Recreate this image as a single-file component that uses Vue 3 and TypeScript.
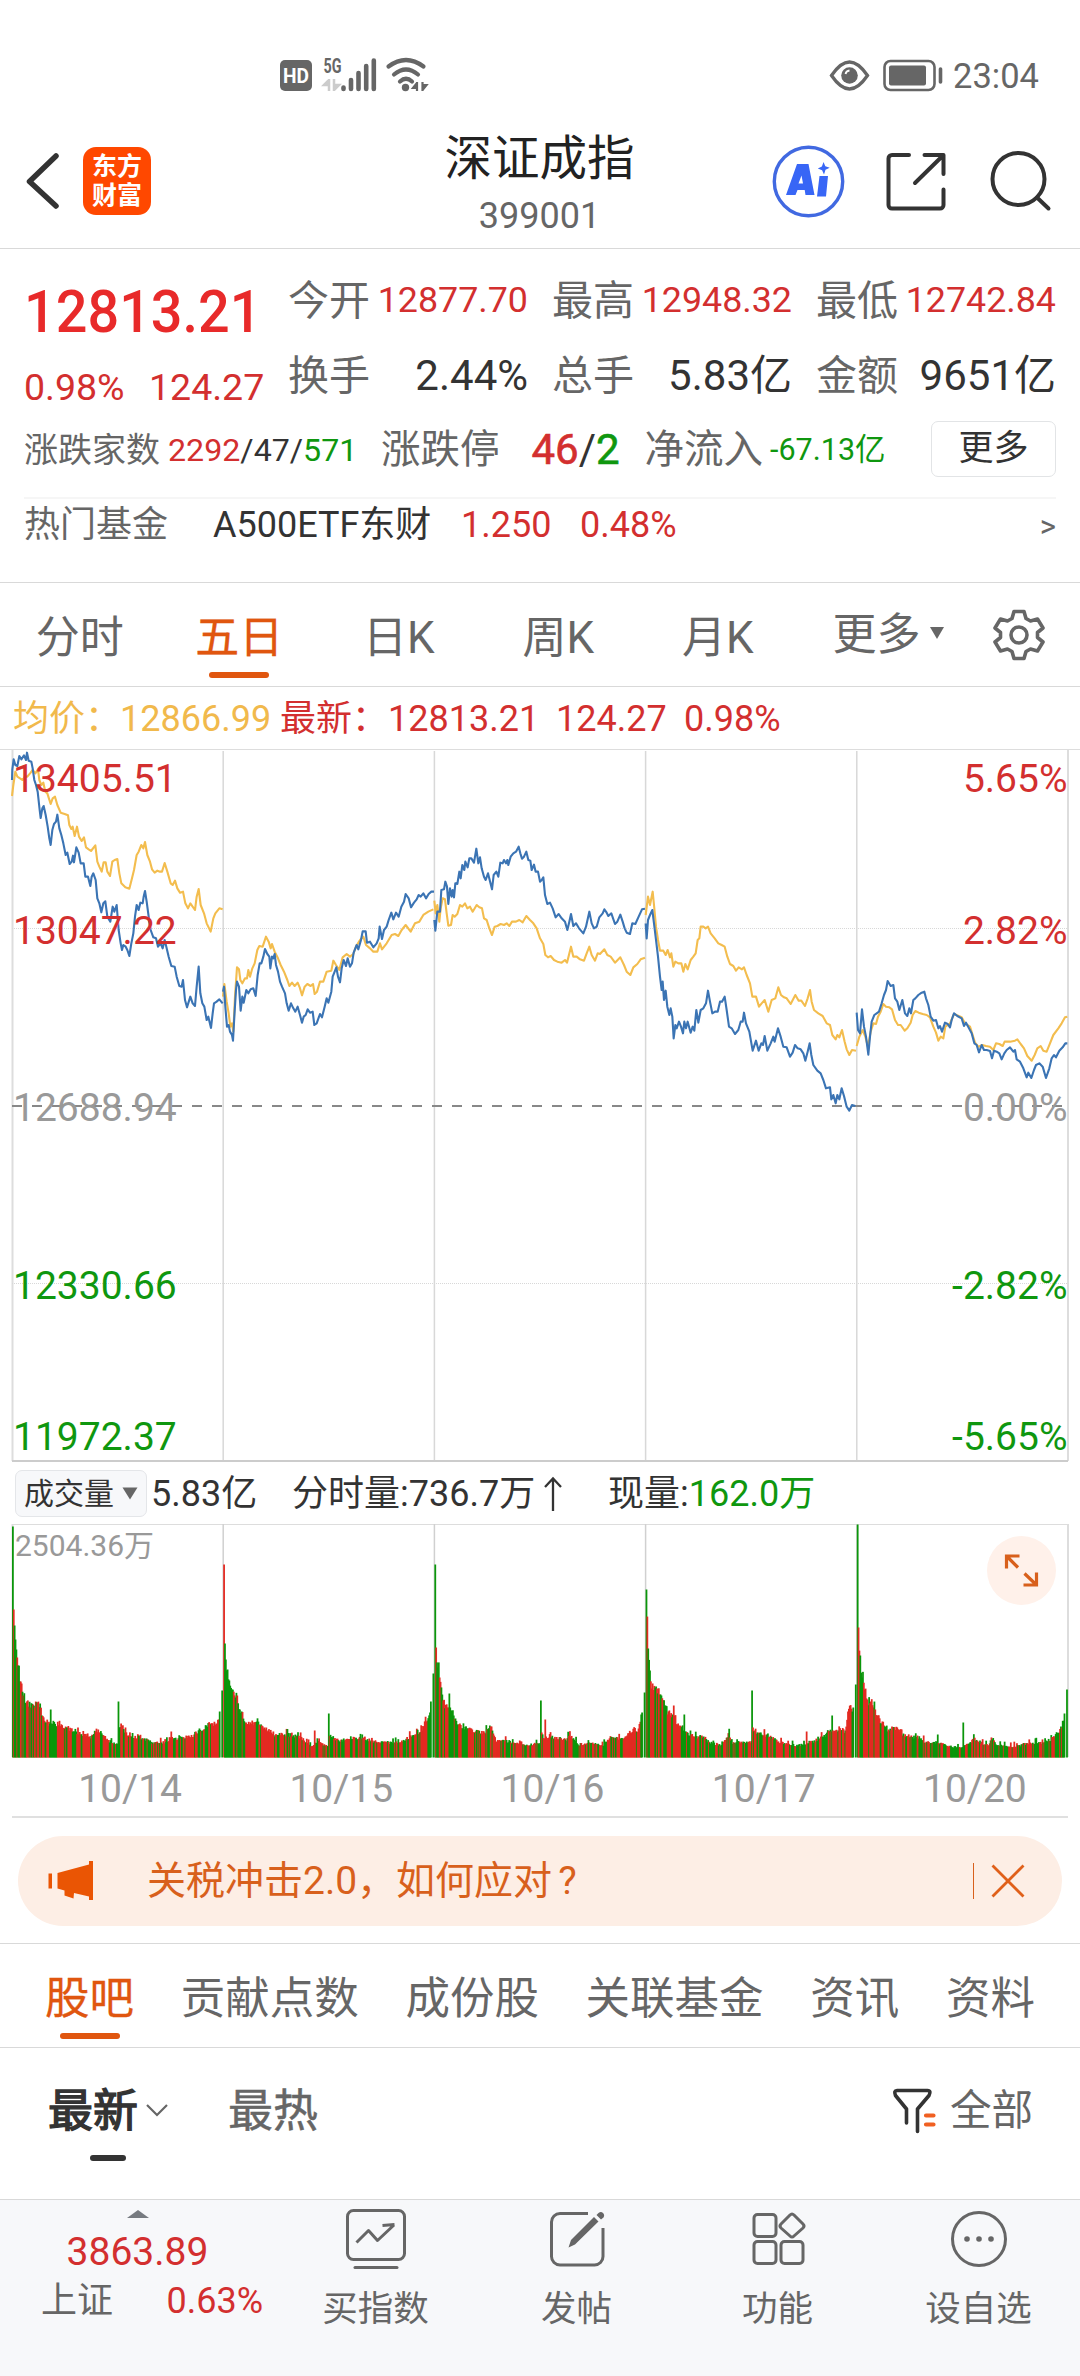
<script setup lang="ts">
interface Session {
  x: number
  y: number
  price: string
  average: string
}

interface Bar {
  x: number
  y: number
  h: number
  color: string
}

const stats = [
  { label: '今开', value: '12877.70' },
  { label: '最高', value: '12948.32' },
  { label: '最低', value: '12742.84' },
]
const totals = [
  { label: '换手', value: '2.44%' },
  { label: '总手', value: '5.83亿' },
  { label: '金额', value: '9651亿' },
]
const periods = ['分时', '五日', '日K', '周K', '月K']
const sections = ['股吧', '贡献点数', '成份股', '关联基金', '资讯', '资料']
const dates = ['10/14', '10/15', '10/16', '10/17', '10/20']

const priceLabels = [
  { y: 42, price: '13405.51', pct: '5.65%', color: '#d32f2f' },
  { y: 194, price: '13047.22', pct: '2.82%', color: '#d32f2f' },
  { y: 371, price: '12688.94', pct: '0.00%', color: '#999' },
  { y: 548.5, price: '12330.66', pct: '-2.82%', color: '#0f970f' },
  { y: 700, price: '11972.37', pct: '-5.65%', color: '#0f970f' },
]

const dayWidth = 211.2
const dayLines = [1, 2, 3, 4].map((n) => 12 + n * dayWidth)

// Intraday lines, in thirds of a pixel relative to each session's origin.
const sessions: Session[] = [
  {
    x: 0,
    y: -20,
    price:
      '36,150 37,118 41,88 46,105 52,108 58,78 64,88 72,76 78,90 81,68 86,92 94,95 98,115 103,150 108,165 113,185 119,240 122,264 127,235 131,228 137,255 143,290 148,325 152,345 157,300 162,282 168,275 172,254 178,295 184,315 190,340 197,375 202,368 209,402 215,395 219,377 222,397 229,352 236,368 242,400 251,400 256,440 264,440 271,468 275,440 280,430 287,450 292,505 298,520 304,547 310,520 316,514 322,560 331,575 338,530 343,545 350,525 356,600 362,640 366,660 370,645 377,650 382,660 388,678 394,640 400,610 405,560 410,525 416,540 421,518 428,520 431,500 435,483 440,515 446,560 452,600 460,622 468,625 474,650 482,640 488,655 494,630 500,655 506,680 514,708 524,710 530,740 538,768 545,770 549,750 555,810 561,832 571,800 578,820 585,828 590,770 596,710 601,790 607,820 613,830 620,870 625,860 633,894 638,850 642,820 650,815 658,808 668,820',
    average:
      '36,198 40,165 46,125 52,140 60,145 68,150 74,140 82,140 92,128 98,120 106,130 114,118 118,150 124,165 130,158 136,185 142,190 152,222 158,205 165,200 172,225 182,248 194,252 204,256 208,285 214,297 218,290 224,318 231,290 237,320 245,333 252,322 258,352 266,358 273,363 286,346 292,395 298,410 305,425 311,397 317,397 322,425 330,438 337,395 344,390 352,387 358,430 364,460 376,472 388,476 396,445 402,420 410,375 416,365 424,345 430,355 435,336 442,375 450,395 456,418 464,428 472,422 480,425 486,425 494,399 502,425 512,460 518,465 525,452 532,475 540,488 549,485 556,520 564,535 571,520 585,540 590,500 596,477 602,525 612,550 620,580 632,605 640,565 646,550 658,535 668,538',
  },
  {
    x: 0,
    y: -20,
    price:
      '669,785 672,770 676,830 681,890 686,885 690,905 696,915 699,932 703,860 708,780 711,755 717,770 722,842 727,800 731,818 739,780 745,790 752,778 760,775 767,798 773,735 779,700 784,700 790,680 795,657 802,672 808,680 811,715 816,680 820,685 824,672 828,705 834,725 840,755 846,770 855,790 860,820 866,842 873,820 880,835 886,845 893,830 900,855 906,878 911,860 917,855 923,838 930,848 938,845 943,885 950,880 960,852 966,862 974,830 980,805 985,818 994,785 998,740 1002,730 1009,712 1014,740 1020,757 1025,715 1031,690 1038,708 1043,685 1050,710 1056,700 1061,668 1070,645 1075,658 1083,630 1088,604 1097,604 1101,638 1110,635 1120,652 1130,640 1136,625 1139,590 1146,627 1152,600 1160,590 1166,570 1174,548 1180,568 1188,548 1196,560 1204,530 1212,515 1217,492 1226,505 1233,532 1242,518 1250,508 1256,495 1262,500 1270,490 1278,505 1286,492 1294,485 1302,485',
    average:
      '669,800 673,762 680,815 686,850 691,890 696,880 700,905 705,800 711,712 717,718 721,750 727,760 735,745 741,745 745,720 750,740 757,715 764,700 772,660 778,648 788,650 798,620 806,635 812,655 816,642 824,665 834,685 842,705 852,725 862,750 868,768 876,758 884,768 893,758 899,772 906,796 914,770 922,762 932,768 939,762 944,792 951,785 960,755 970,755 980,725 994,722 1000,692 1008,705 1018,720 1028,682 1040,672 1050,680 1060,672 1068,650 1080,630 1090,620 1098,645 1110,655 1120,665 1132,665 1140,640 1146,658 1160,640 1175,615 1185,612 1195,618 1205,600 1217,585 1232,605 1245,580 1258,575 1270,555 1285,545 1300,538',
  },
  {
    x: 420,
    y: 30,
    price:
      '43,420 46,452 52,395 60,395 64,330 72,328 76,305 81,320 85,372 90,325 95,350 98,330 102,352 106,310 112,312 118,275 122,295 127,255 133,270 136,245 143,262 148,235 154,235 162,248 169,206 175,250 180,232 185,265 192,290 197,300 204,280 209,300 216,328 221,285 229,275 235,290 241,248 248,250 252,240 258,250 262,240 265,255 272,230 280,220 288,215 296,200 301,220 306,236 312,230 319,215 325,240 331,242 335,270 342,254 347,275 354,275 360,305 365,300 370,292 375,345 382,372 390,368 398,385 407,412 416,402 425,415 435,425 442,450 448,425 453,402 460,438 468,430 477,445 490,460 498,440 508,395 515,430 522,445 530,440 538,412 548,400 553,388 560,398 565,408 574,400 585,432 592,425 601,404 608,425 614,445 620,458 630,462 637,430 646,432 656,410 666,388 675,386',
    average:
      '43,362 47,400 52,375 58,425 62,385 68,355 75,358 80,400 85,437 93,435 98,405 104,410 112,402 120,375 127,380 135,370 142,385 150,380 158,395 170,375 178,382 186,385 192,415 200,420 208,445 216,465 224,440 232,438 242,432 252,435 260,430 268,438 276,425 288,425 298,420 308,427 319,408 330,420 340,430 350,445 360,475 370,492 376,525 384,532 392,528 402,540 412,545 425,548 435,540 441,548 453,500 460,530 470,530 480,538 492,542 500,520 508,500 515,525 525,542 533,520 540,522 553,508 562,525 572,530 585,548 601,532 612,555 620,575 631,585 640,562 652,552 662,538 675,533',
  },
  {
    x: 420,
    y: 30,
    price:
      '677,430 680,475 684,420 690,405 697,390 702,430 708,480 714,530 720,590 725,630 728,605 732,660 737,632 742,680 748,705 752,685 757,710 761,775 766,735 770,745 777,725 783,740 789,760 793,725 798,745 803,725 812,758 818,740 823,752 829,690 835,728 842,690 850,685 858,670 864,632 870,665 877,700 885,695 893,695 900,665 906,665 914,650 920,690 927,740 935,745 945,762 955,750 962,725 968,725 972,698 978,730 988,755 998,812 1008,782 1016,812 1024,790 1029,795 1034,768 1042,812 1052,790 1060,770 1064,785 1074,745 1082,770 1090,800 1100,802 1110,830 1118,818 1125,795 1133,805 1142,808 1150,820 1156,842 1163,815 1169,790 1174,825 1180,855 1192,872 1202,880 1210,900 1218,925 1230,922 1234,958 1240,945 1247,970 1252,945 1258,958 1265,925 1272,948 1280,980 1288,992 1296,975 1306,978',
    average:
      '677,405 684,350 690,375 698,335 702,375 708,440 714,480 720,512 730,512 737,525 743,510 750,532 754,520 760,560 766,545 775,550 784,550 790,575 796,552 803,568 812,540 820,530 827,520 833,480 838,475 842,440 850,440 857,445 864,440 872,460 884,475 895,490 905,495 914,500 922,530 930,552 940,558 948,572 956,562 966,568 972,562 980,585 990,610 997,650 1008,650 1017,680 1025,670 1034,660 1045,695 1055,660 1066,655 1075,622 1083,645 1092,652 1100,655 1112,672 1126,645 1136,662 1144,662 1155,678 1163,655 1170,630 1175,665 1182,690 1195,700 1208,708 1220,730 1230,735 1237,765 1247,778 1252,765 1258,772 1266,750 1274,785 1280,808 1288,825 1296,810 1308,812',
  },
  {
    x: 780,
    y: 100,
    price:
      '230,488 234,540 240,550 246,478 252,530 258,560 265,614 270,560 275,515 283,495 290,490 297,485 305,460 312,435 318,420 323,393 332,408 340,405 345,445 352,455 358,480 367,450 375,490 382,498 388,475 393,490 400,450 406,445 415,435 425,428 433,425 438,445 445,465 452,500 460,512 468,510 475,535 480,528 486,545 495,518 503,522 510,532 515,510 522,490 532,498 545,505 552,528 558,518 567,535 575,550 583,580 590,585 597,607 605,585 612,600 620,600 630,603 636,625 642,602 650,605 658,610 665,628 673,610 680,600 690,592 700,605 705,600 710,628 720,635 730,655 740,682 745,668 754,684 762,660 768,645 778,640 788,650 798,684 808,655 815,625 822,615 828,622 838,602 848,592 856,580 862,580',
    average:
      '230,588 238,560 248,540 256,560 264,590 272,545 280,520 288,522 294,500 302,485 310,462 318,470 328,472 336,478 345,510 354,525 362,525 374,542 382,535 392,518 398,495 406,483 416,488 428,492 440,495 450,502 460,530 468,548 475,572 482,560 490,565 496,530 510,520 522,492 545,502 555,520 570,530 585,578 595,590 607,585 618,588 630,590 640,600 648,580 658,582 668,588 674,575 690,575 705,572 712,568 722,582 732,595 742,618 755,632 764,615 772,595 782,588 790,602 800,605 810,580 820,555 835,535 845,520 855,502 862,500',
  },
]

// Volume envelopes: trading minute -> bar height.
const volumes: [number, number][][] = [
  [[0, 231], [1, 148], [2, 132], [3, 118], [4, 108], [5, 100], [6, 92], [8, 76], [10, 74], [12, 62], [15, 54], [20, 50], [25, 50], [28, 55], [31, 54], [33, 42], [38, 35], [42, 34], [43, 48], [44, 34], [50, 31], [62, 30], [72, 26], [88, 21], [97, 28], [107, 18], [118, 13], [119, 13], [120, 56], [121, 30], [123, 34], [130, 22], [150, 19], [158, 15], [178, 15], [180, 26], [181, 18], [190, 20], [205, 22], [220, 32], [232, 33], [235, 46]],
  [[0, 193], [1, 114], [2, 98], [4, 88], [6, 77], [9, 68], [13, 60], [15, 62], [18, 48], [25, 35], [40, 33], [47, 28], [59, 22], [75, 23], [87, 20], [98, 12], [102, 12], [103, 27], [104, 16], [117, 12], [118, 12], [119, 44], [120, 22], [132, 17], [155, 20], [175, 15], [200, 15], [212, 21], [222, 25], [230, 36], [234, 45], [235, 56]],
  [[0, 193], [1, 110], [3, 90], [5, 80], [9, 57], [14, 50], [15, 50], [16, 64], [17, 50], [21, 42], [27, 33], [42, 28], [54, 24], [63, 31], [69, 17], [85, 16], [100, 12], [119, 14], [120, 57], [121, 22], [124, 21], [125, 38], [126, 20], [150, 18], [151, 24], [163, 13], [178, 15], [190, 12], [203, 21], [212, 18], [222, 25], [231, 29], [235, 45]],
  [[0, 168], [2, 109], [4, 87], [6, 69], [12, 69], [17, 62], [21, 52], [27, 42], [30, 43], [31, 52], [32, 42], [35, 33], [42, 27], [43, 43], [44, 26], [49, 22], [64, 20], [72, 15], [86, 12], [94, 24], [97, 15], [119, 16], [120, 67], [121, 30], [126, 24], [140, 22], [150, 15], [170, 12], [181, 13], [182, 26], [183, 15], [190, 16], [203, 22], [210, 26], [211, 42], [212, 27], [226, 27], [229, 46], [235, 50]],
  [[0, 233], [1, 130], [3, 102], [5, 80], [8, 68], [11, 58], [15, 56], [18, 50], [22, 42], [27, 34], [35, 28], [45, 30], [51, 22], [70, 20], [78, 15], [90, 15], [91, 24], [92, 15], [105, 11], [119, 10], [120, 35], [121, 13], [133, 18], [148, 12], [153, 20], [158, 12], [180, 11], [195, 15], [211, 15], [219, 18], [227, 24], [232, 30], [235, 44]],
]
const closing = [67, 84, 65, 73, 68]
const openRed = [false, true, false, false, false]
const floorY = 233.5

function buildBars(): Bar[] {
  const bars: Bar[] = []
  let seed = 20251
  const rand = () => {
    seed = (seed * 1103515245 + 12345) % 2147483648
    return seed / 2147483648
  }
  const red = '#e32a22'
  const green = '#0a960a'
  volumes.forEach((points, day) => {
    let k = 0
    let up = false
    for (let m = 0; m < 236; m++) {
      while (k < points.length - 2 && points[k + 1][0] <= m) k++
      const [m0, h0] = points[k]
      const [m1, h1] = points[k + 1]
      const base = h0 + ((h1 - h0) * (m - m0)) / (m1 - m0)
      const exact = points.some((p) => p[0] === m && p[1] > 24)
      const h = exact ? base : base * (0.9 + rand() * 0.2) + (rand() > 0.9 ? 4 : 0)
      if (rand() > 0.64) up = !up
      const isRed = m === 0 ? openRed[day] : m === 1 ? !openRed[day] : m === 120 ? day === 1 : up
      bars.push({ x: 12 + day * dayWidth + m * 0.88, y: floorY - h, h, color: isRed ? red : green })
    }
    bars.push({
      x: 12 + day * dayWidth + 209.3,
      y: floorY - closing[day],
      h: closing[day],
      color: green,
    })
  })
  return bars
}

const bars = buildBars()
</script>

<template>
  <div class="screen">
    <div class="status">
      <svg width="150" height="52" viewBox="279 45 150 52" class="status-left">
        <rect x="280" y="60" width="32" height="31" rx="5" fill="#666" />
        <text x="296" y="83" text-anchor="middle" font-size="21" font-weight="700" fill="#fff" textLength="26" lengthAdjust="spacingAndGlyphs">HD</text>
        <text x="323.500" y="72.500" font-size="20" font-weight="700" fill="#666" textLength="18" lengthAdjust="spacingAndGlyphs">5G</text>
        <path d="M329 79V91M329 80l-5 5h5M334 79V91M334 90l5-5h-5" stroke="#ccc" stroke-width="2.500" fill="#ccc" />
        <g stroke="#666" stroke-width="4.600" stroke-linecap="round">
          <path d="M343.500 87.500V89M351 80V89M358.500 73V89M366.200 66V89M373.800 60.500V89" />
        </g>
        <g fill="none" stroke="#666" stroke-width="4.200" stroke-linecap="round">
          <path d="M388.500 66.500Q406 53.500 423.500 66.500M394 74.500Q406 64.500 418 74.500M400 81.500Q406 76 412 81.500" />
        </g>
        <circle cx="405.500" cy="87.500" r="3.700" fill="#666" />
        <path d="M417 82v9M417 83l-4 5h4M422.500 82v9M422.500 90l4-5h-4" stroke="#666" stroke-width="2.200" fill="#666" />
      </svg>
      <svg width="116" height="36" viewBox="829 57 116 36" class="status-right">
        <path d="M831.500 75.500C838 66 844 62 849.500 62S861 66 867.500 75.500C861 85 855 89 849.500 89S838 85 831.500 75.500Z" fill="none" stroke="#666" stroke-width="3.300" />
        <circle cx="849.500" cy="75.500" r="8.300" fill="#666" />
        <path d="M845.500 74a4.500 4.500 0 0 1 4-3.500" stroke="#fff" stroke-width="1.800" fill="none" />
        <rect x="884.500" y="61" width="50" height="29" rx="6" fill="none" stroke="#666" stroke-width="2.600" />
        <rect x="889" y="65.500" width="37" height="20" rx="2" fill="#666" />
        <path d="M940.500 69v13" stroke="#666" stroke-width="3.600" stroke-linecap="round" />
      </svg>
      <span class="clock">23:04</span>
    </div>

    <header class="header">
      <svg width="34" height="60" viewBox="25 151 34 60" class="back">
        <path d="M56 156 29.500 181.500 56 206" fill="none" stroke="#333" stroke-width="5.500" stroke-linecap="round" stroke-linejoin="round" />
      </svg>
      <div class="logo"><span>东方</span><span>财富</span></div>
      <div class="heading">
        <div class="name">深证成指</div>
        <div class="code">399001</div>
      </div>
      <svg width="284" height="80" viewBox="770 142 284 80" class="tools">
        <circle cx="808.500" cy="181.500" r="34.200" fill="none" stroke="#4169e1" stroke-width="3.400" />
        <path fill="#3866f6" fill-rule="evenodd" d="M797 164h11.500l6 31h-9l-.8-5h-7.200l-2 5H786ZM801.500 175.500l-3 8h4.500ZM819.500 176h8.500l-2 20.500h-9ZM823.500 162l1.800 4.200 4.400 1.600-4.200 2-1.500 4.700-1.900-4.300-4.300-1.700 4.100-2Z" />
        <g fill="none" stroke="#333" stroke-width="4" stroke-linecap="round" stroke-linejoin="round">
          <path d="M909 155h-17a3.500 3.500 0 0 0-3.500 3.500V205a3.500 3.500 0 0 0 3.500 3.500h48a3.500 3.500 0 0 0 3.500-3.500V189.500" />
          <path d="M924.500 155H943.500V174M943 155.500 915 183" />
          <circle cx="1018.500" cy="179" r="26" />
          <path d="M1037 197.500 1048.500 208.500" />
        </g>
      </svg>
    </header>

    <section class="quote">
      <div class="quote-top">
        <div class="last">
          <div class="last-price">12813.21</div>
          <div class="change"><span>0.98%</span><span>124.27</span></div>
        </div>
        <div class="stat-grid">
          <div v-for="s in stats" :key="s.label" class="stat">
            <span>{{ s.label }}</span><span class="stat-red">{{ s.value }}</span>
          </div>
          <div v-for="s in totals" :key="s.label" class="stat">
            <span>{{ s.label }}</span><span class="stat-dark">{{ s.value }}</span>
          </div>
        </div>
      </div>
      <div class="breadth">
        <span class="b1">涨跌家数</span>
        <span class="b2"><i class="red">2292</i>/47/<i class="green">571</i></span>
        <span class="b3">涨跌停</span>
        <span class="b4"><i class="red">46</i>/<i class="green">2</i></span>
        <span class="b3">净流入</span>
        <span class="b5 green">-67.13亿</span>
        <button class="more">更多</button>
      </div>
      <div class="fund">
        <span>热门基金</span>
        <span class="dark">A500ETF东财</span>
        <span class="red">1.250</span>
        <span class="red">0.48%</span>
        <span class="gt">&gt;</span>
      </div>
    </section>

    <nav class="periods">
      <span v-for="(p, i) in periods" :key="p" class="period" :class="{ active: i === 1 }">{{ p }}</span>
      <span class="period more-period">更多
        <svg width="16" height="14" viewBox="0 0 16 14"><path d="M1 1h14L8 13Z" fill="#666" /></svg>
      </span>
      <svg width="54" height="54" viewBox="-27 -27 54 54" class="gear">
        <path d="M-5-23.500H5L7-16.500 11.500-14 18.500-16 24-7 18.500-2.500V2.500L24 7 18.500 16 11.500 14 7 16.500 5 23.500H-5L-7 16.500-11.500 14-18.500 16-24 7-18.500 2.500V-2.500L-24-7-18.500-16-11.500-14-7-16.500Z" fill="none" stroke="#666" stroke-width="3.600" stroke-linejoin="round" />
        <circle r="8" fill="none" stroke="#666" stroke-width="3.600" />
      </svg>
    </nav>

    <div class="legend">
      <span class="avg">均价：</span><span class="avg">12866.99</span>
      <span>最新：</span><span>12813.21</span><span>124.27</span><span>0.98%</span>
    </div>

    <svg class="price-chart" width="1080" height="713" viewBox="0 0 1080 713">
      <g stroke="#d8d8d8" stroke-width="1.500">
        <line v-for="x in dayLines" :key="x" :x1="x" :x2="x" y1="1" y2="711" />
        <path d="M12.500 0V711M1068 0V711" stroke="#ddd" stroke-width="2" />
        <path d="M12 711H1068" stroke="#ccc" stroke-width="2" />
        <path d="M12 178.500H1068M12 533.500H1068" stroke-width="1" stroke-dasharray="1 1" />
      </g>
      <path d="M12 356H1068" stroke="#888" stroke-width="2" stroke-dasharray="10 10" />
      <g v-for="(s, i) in sessions" :key="i" :transform="`translate(${s.x} ${s.y}) scale(0.33333)`" fill="none" stroke-width="6.300" stroke-linejoin="round">
        <polyline :points="s.average" stroke="#f3bd4e" />
        <polyline :points="s.price" stroke="#3b74b4" />
      </g>
      <g v-for="l in priceLabels" :key="l.price" font-size="39" :fill="l.color">
        <text x="13" :y="l.y">{{ l.price }}</text>
        <text x="1067.500" :y="l.y" text-anchor="end">{{ l.pct }}</text>
      </g>
    </svg>

    <div class="volume-head">
      <span class="picker">成交量
        <svg width="16" height="13" viewBox="0 0 16 13"><path d="M.5.500h15L8 12.500Z" fill="#666" /></svg>
      </span>
      <span class="v1">5.83亿</span>
      <span class="v2">分时量:736.7万</span>
      <svg class="up" width="20" height="36" viewBox="0 0 20 36"><path d="M10 35V3M2 11l8-8.500 8 8.500" fill="none" stroke="#333" stroke-width="2.300" /></svg>
      <span>现量:<i class="green">162.0万</i></span>
    </div>

    <svg class="volume-chart" width="1080" height="234" viewBox="0 0 1080 234">
      <path d="M12 .500H1068" stroke="#ddd" />
      <line v-for="x in dayLines" :key="x" :x1="x" :x2="x" y1="0" y2="233" stroke="#d0d0d0" stroke-width="1.500" />
      <path d="M1068 0V233M12.500 0V233" stroke="#ddd" stroke-width="2" />
      <rect v-for="(b, i) in bars" :key="i" :x="b.x" :y="b.y" width="1.760" :height="b.h" :fill="b.color" />
      <text x="15" y="32" font-size="30" fill="#999">2504.36万</text>
      <circle cx="1021.500" cy="46.500" r="34.500" fill="#fff1ea" />
      <path d="M1006.500 44.500V32H1019.500M1007 32.500 1018 43.500M1036.500 48.500V61H1023.500M1036 60.500 1024.500 49.500" fill="none" stroke="#d8601c" stroke-width="3.200" />
    </svg>
    <div class="dates"><span v-for="d in dates" :key="d">{{ d }}</span></div>

    <div class="banner">
      <svg width="46" height="40" viewBox="48 1861 46 40" class="horn">
        <path d="M48.500 1873.500h3.500v15h-3.500ZM57.500 1873 89 1864.500V1861h4v39h-4v-3.500l-15-3.500-.5 5.500-9-3v-5L57.500 1888.500Z" fill="#ea5504" />
      </svg>
      <span class="banner-text">关税冲击2.0，如何应对<i class="mark">?</i></span>
      <span class="bar"></span>
      <svg width="34" height="34" viewBox="0 0 34 34"><path d="M1.500 1.500 32.500 32.500M32.500 1.500 1.500 32.500" stroke="#e0601a" stroke-width="2.800" /></svg>
    </div>

    <nav class="sections">
      <span v-for="(s, i) in sections" :key="s" :class="{ active: i === 0 }">{{ s }}</span>
    </nav>

    <div class="feed">
      <span class="newest">最新</span>
      <svg width="24" height="14" viewBox="0 0 24 14" class="chev"><path d="M2 2 12 12 22 2" fill="none" stroke="#666" stroke-width="2.200" /></svg>
      <span class="hottest">最热</span>
      <svg width="46" height="50" viewBox="889 2085 46 50" class="filter">
        <path d="M904.500 2122V2108L893.500 2094.500Q891.500 2089.500 895 2089.500H925.500Q929.500 2089.500 927 2094.500L915.500 2108V2130.500" fill="none" stroke="#333" stroke-width="3.600" stroke-linecap="round" stroke-linejoin="round" />
        <path d="M924 2114.500h7.500M924 2123.500h7.500" stroke="#f06022" stroke-width="4.200" stroke-linecap="round" />
      </svg>
      <span class="all">全部</span>
    </div>

    <footer class="footer">
      <div class="index">
        <svg width="22" height="8" viewBox="0 0 22 8"><path d="M0 8 11 0 22 8Z" fill="#777b80" /></svg>
        <div class="index-value">3863.89</div>
        <div class="index-row"><span>上证</span><span class="red">0.63%</span></div>
      </div>
      <div class="action">
        <svg width="64" height="62" viewBox="344 2209 64 62" fill="none" stroke="#666" stroke-width="3">
          <rect x="347.500" y="2211.500" width="57" height="49" rx="6" />
          <path d="M356.500 2243.500 368.500 2231.500 377.500 2241.500 394 2226M382.500 2226.500 394.500 2225.500" stroke-linejoin="round" />
          <path d="M355 2268.500H397" stroke-linecap="round" />
        </svg>
        <span>买指数</span>
      </div>
      <div class="action">
        <svg width="64" height="62" viewBox="545 2209 64 62" fill="none" stroke="#666" stroke-width="3">
          <path d="M588 2214.500H560a8.500 8.500 0 0 0-8.500 8.500V2257.500a8.500 8.500 0 0 0 8.500 8.500H594.500a8.500 8.500 0 0 0 8.500-8.500V2229" />
          <path d="M568.500 2248.500 571 2241 594 2218 598.500 2222.500 575 2245.500ZM596.500 2216 598.500 2214q2.500-2 4.500 0t.5 4.500L601 2220.500Z" fill="#666" stroke="none" />
        </svg>
        <span>发帖</span>
      </div>
      <div class="action">
        <svg width="64" height="62" viewBox="746 2209 64 62" fill="none" stroke="#666" stroke-width="3">
          <rect x="754" y="2215.500" width="22" height="22" rx="3.500" />
          <rect x="754" y="2242.500" width="22" height="22" rx="3.500" />
          <rect x="781" y="2242.500" width="22" height="22" rx="3.500" />
          <path d="M790 2216 Q792 2214 794 2216L803 2225Q805 2227 803 2229L794 2237Q792 2239 790 2237L781 2229Q779 2227 781 2225Z" />
        </svg>
        <span>功能</span>
      </div>
      <div class="action">
        <svg width="64" height="62" viewBox="947 2209 64 62">
          <circle cx="979" cy="2240" r="26.500" fill="none" stroke="#666" stroke-width="3" />
          <path d="M967 2240h.01M979 2240h.01M991 2240h.01" stroke="#666" stroke-width="5.600" stroke-linecap="round" />
        </svg>
        <span>设自选</span>
      </div>
    </footer>
  </div>
</template>

<style>
body {
  margin: 0;
  background: #fff;
}
</style>

<style scoped>
.screen {
  width: 1080px;
  height: 2376px;
  overflow: hidden;
  display: flex;
  flex-direction: column;
  background: #fff;
  color: #666;
  font-family: Roboto, 'Noto Sans CJK SC', sans-serif;
  line-height: 1;
  white-space: nowrap;
}
.screen > * {
  flex: none;
  box-sizing: border-box;
}
svg {
  display: block;
  flex: none;
}
i {
  font-style: normal;
}
.red {
  color: #d32f2f;
}
.green {
  color: #0f970f;
}
.dark {
  color: #333;
}

.status {
  height: 116px;
  padding-top: 45px;
  display: flex;
}
.status-left {
  margin-left: 279px;
}
.status-right {
  margin: 12px 0 0 400px;
}
.clock {
  margin: 13px 0 0 8px;
  font-size: 34.5px;
  line-height: 36px;
}

.header {
  height: 133px;
  display: flex;
  border-bottom: 1.5px solid #d9d9d9;
}
.back {
  margin: 35px 0 0 25px;
}
.logo {
  margin: 31px 0 0 24px;
  width: 68px;
  height: 68px;
  box-sizing: border-box;
  padding-top: 5px;
  border-radius: 13px;
  background: #ff4800;
  color: #fff;
  font-size: 25px;
  font-weight: 700;
  line-height: 29px;
  text-align: center;
  display: flex;
  flex-direction: column;
}
.heading {
  width: 619px;
  padding-top: 18px;
  box-sizing: border-box;
  text-align: center;
}
.heading > * {
  width: 777px;
}
.name {
  font-size: 47.5px;
  line-height: 50px;
  color: #222;
}
.code {
  margin-top: 14px;
  font-size: 36px;
  line-height: 36px;
}
.tools {
  margin-top: 26px;
}

.quote {
  height: 334px;
  padding: 27px 24px 0;
  border-bottom: 1.5px solid #d9d9d9;
}
.quote-top {
  display: flex;
  height: 150px;
}
.last {
  width: 264px;
}
.last-price {
  margin-top: 6px;
  font-size: 60px;
  line-height: 60px;
  font-weight: 500;
  color: #e82a2a;
  transform: scaleX(0.93);
  transform-origin: 0 50%;
}
.change {
  margin-top: 25px;
  display: flex;
  font-size: 37.5px;
  line-height: 40px;
  color: #d32f2f;
}
.change span:first-child {
  width: 125px;
}
.stat-grid {
  display: grid;
  grid-template-columns: repeat(3, 240px);
  grid-template-rows: 50px 50px;
  row-gap: 25px;
  column-gap: 24px;
}
.stat {
  display: flex;
  align-items: center;
  justify-content: space-between;
  font-size: 41px;
}
.stat-red {
  font-size: 35.8px;
  color: #d32f2f;
}
.stat-dark {
  font-size: 42px;
  color: #333;
}
.breadth {
  height: 74px;
  box-sizing: content-box;
  display: flex;
  align-items: center;
  margin-top: -3px;
  border-bottom: 2px solid #f6f6f6;
  line-height: 50px;
}
.breadth > * {
  margin-top: -20px;
}
.b1 {
  font-size: 34px;
  width: 144px;
}
.b2 {
  width: 213px;
  font-size: 32.2px;
  color: #333;
}
.b3 {
  font-size: 39.5px;
}
.b4 {
  width: 115px;
  padding-left: 32px;
  box-sizing: border-box;
  margin-right: 30px;
  font-size: 42px;
  color: #333;
}
.b4 i {
  -webkit-text-stroke: 0.6px currentColor;
}
.b5 {
  margin-left: 7px;
  font-size: 30.5px;
}
.breadth .more {
  margin: -22px 0 0 auto;
  width: 125px;
  height: 56px;
  padding: 0;
  border: 1.5px solid #e2e4e6;
  border-radius: 7px;
  background: #fff;
  color: #333;
  font: inherit;
  font-size: 35px;
  line-height: 50px;
}
.fund {
  height: 52px;
  display: grid;
  grid-template-columns: 189px 248px 119px 1fr 18px;
  align-items: center;
  font-size: 36px;
}
.gt {
  font-size: 31px;
  text-align: right;
  padding-top: 2px;
}

.periods {
  height: 104px;
  display: flex;
  align-items: center;
  border-bottom: 1.5px solid #d9d9d9;
  font-size: 44px;
}
.period {
  height: 104px;
  line-height: 110px;
  width: 159.5px;
  text-align: center;
  position: relative;
}
.more-period {
  display: flex;
  align-items: center;
  gap: 8px;
  margin-left: 35px;
  width: 159px;
}
.more-period svg {
  margin-top: -3px;
}
.active {
  color: #e0560f;
  -webkit-text-stroke: 0.3px currentColor;
  position: relative;
}
.active::after {
  content: '';
  position: absolute;
  left: 50%;
  margin-left: -30px;
  bottom: 9px;
  width: 60px;
  height: 6px;
  border-radius: 3px;
  background: #e0560f;
}

.legend {
  height: 63px;
  padding: 2px 0 0 13px;
  display: grid;
  grid-template-columns: 107px 160px 108px 168px 128px 1fr;
  align-items: center;
  font-size: 36px;
  color: #d32f2f;
  border-bottom: 1.5px solid #ddd;
}
.avg {
  color: #f1b94c;
}

.volume-head {
  height: 61px;
  padding-left: 15px;
  display: flex;
  align-items: center;
  color: #333;
  font-size: 36px;
}
.picker {
  width: 132px;
  height: 47px;
  box-sizing: border-box;
  padding-left: 8px;
  display: flex;
  align-items: center;
  gap: 8px;
  border: 1.5px solid #e4e6e9;
  border-radius: 7px;
  background: #f7f8fa;
  font-size: 30px;
}
.v1 {
  width: 141px;
  margin-left: 4px;
}
.v2 {
  width: 251px;
}
.up {
  margin-right: 45px;
}

.dates {
  height: 60px;
  margin: 0 12px;
  display: grid;
  grid-template-columns: repeat(5, 1fr);
  line-height: 62px;
  font-size: 39px;
  color: #999;
  text-align: center;
  border-bottom: 2px solid #e0e0e0;
}
.dates span {
  padding-left: 25px;
}

.banner {
  height: 90px;
  margin: 18px 18px 17px;
  padding: 0 37px 0 30px;
  display: flex;
  align-items: center;
  border-radius: 45px;
  background: #fdeee5;
  color: #d8601c;
  font-size: 39px;
}
.banner-text {
  margin-left: 53px;
  flex: 1;
}
.mark {
  margin-left: 6px;
}
.bar {
  width: 1.5px;
  height: 36px;
  margin-right: 17px;
  background: #d8601c;
}

.sections {
  height: 105px;
  padding: 0 45px;
  display: flex;
  justify-content: space-between;
  line-height: 110px;
  font-size: 44.5px;
  border-top: 1.5px solid #d9d9d9;
  border-bottom: 1.5px solid #d9d9d9;
}
.sections .active {
  height: 103px;
}
.sections .active::after {
  bottom: 8px;
}

.feed {
  height: 152px;
  padding: 0 47px 25px 48px;
  display: flex;
  align-items: center;
  font-size: 45px;
  border-bottom: 1.5px solid #d9d9d9;
}
.newest {
  position: relative;
  color: #333;
  -webkit-text-stroke: 1.4px #333;
}
.newest::after {
  content: '';
  position: absolute;
  left: 42px;
  top: 66px;
  width: 36px;
  height: 6px;
  border-radius: 3px;
  background: #333;
}
.chev {
  margin: -2px 59px 0 7px;
}
.hottest {
  -webkit-text-stroke: 0.5px currentColor;
}
.filter {
  margin-left: auto;
}
.all {
  margin-left: 13px;
  font-size: 41.5px;
}

.footer {
  flex: 1 !important;
  display: flex;
  background: #f7f8fa;
}
.index {
  width: 275px;
  padding-top: 10px;
  display: flex;
  flex-direction: column;
  align-items: center;
  box-sizing: border-box;
}
.index-value {
  margin-top: 14px;
  font-size: 39px;
  line-height: 40px;
  color: #d32f2f;
}
.index-row {
  width: 100%;
  margin-top: 9px;
  padding: 0 12px 0 41px;
  box-sizing: border-box;
  display: flex;
  justify-content: space-between;
  font-size: 36px;
  line-height: 41px;
}
.action {
  width: 201px;
  padding-top: 8px;
  display: flex;
  flex-direction: column;
  align-items: center;
  font-size: 35.5px;
}
.action span {
  margin-top: 22px;
}
</style>
